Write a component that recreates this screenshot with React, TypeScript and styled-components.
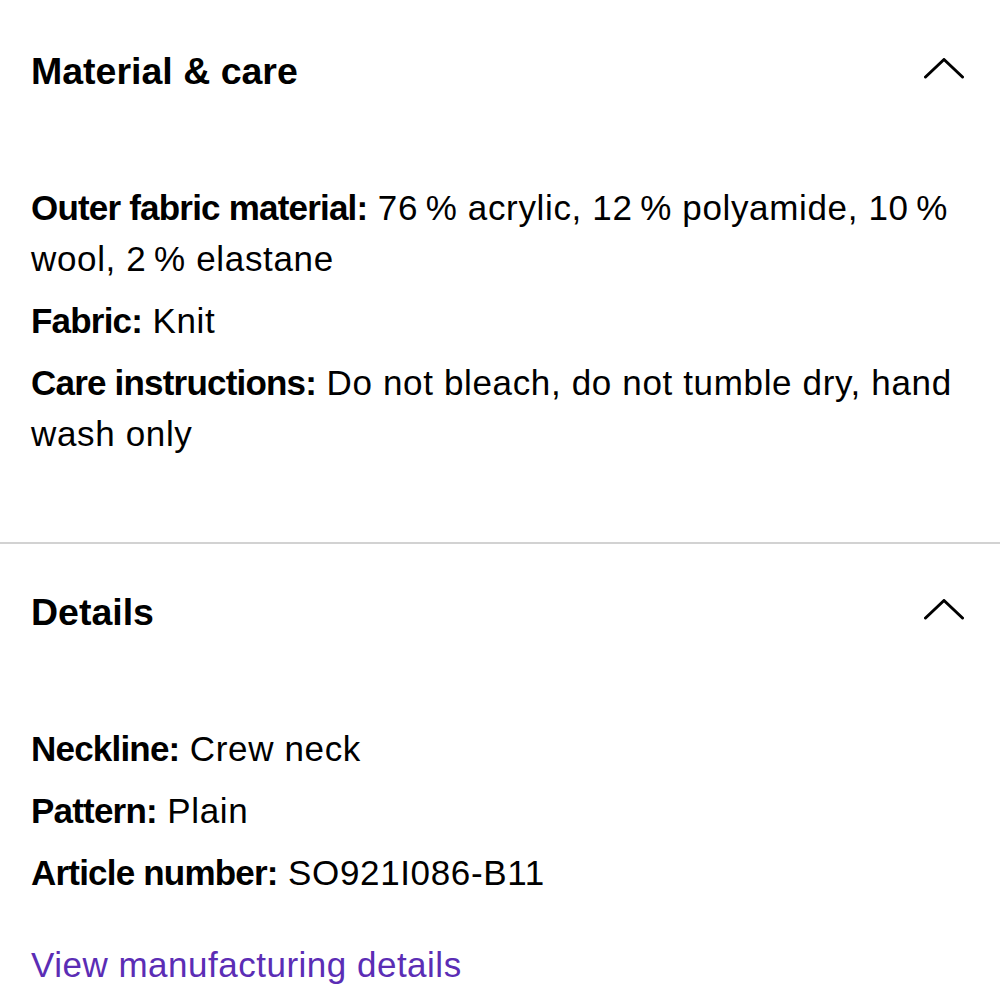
import styled, { createGlobalStyle } from 'styled-components';

type Attr = { label: string; value: string };

// narrow no-break space between number and percent sign, as in the source
const pct = (n: number) => `${n}\u202F%`;

const material: Attr[] = [
  {
    label: 'Outer fabric material:',
    value: `${pct(76)} acrylic, ${pct(12)} polyamide, ${pct(10)} wool, ${pct(2)} elastane`,
  },
  { label: 'Fabric:', value: 'Knit' },
  { label: 'Care instructions:', value: 'Do not bleach, do not tumble dry, hand wash only' },
];

const details: Attr[] = [
  { label: 'Neckline:', value: 'Crew neck' },
  { label: 'Pattern:', value: 'Plain' },
  { label: 'Article number:', value: 'SO921I086-B11' },
];

const ChevronUp = () => (
  <svg width="40" height="21" viewBox="0 0 40 21" fill="none">
    <path d="M1.5 19 L20 1.5 L38.5 19" stroke="#000" strokeWidth="3" strokeLinecap="round" strokeLinejoin="round" />
  </svg>
);

const Section = ({ title, items, link }: { title: string; items: Attr[]; link?: string }) => (
  <StyledSection>
    <Header>
      <Title>{title}</Title>
      <Toggle aria-label="Collapse">
        <ChevronUp />
      </Toggle>
    </Header>
    <List>
      {items.map((it) => (
        <Item key={it.label}>
          <Label>{it.label}</Label> {it.value}
        </Item>
      ))}
    </List>
    {link && <Link href="#">{link}</Link>}
  </StyledSection>
);

export default function App() {
  return (
    <>
      <GlobalStyle />
      <Page>
        <Section title="Material & care" items={material} />
        <Section title="Details" items={details} link="View manufacturing details" />
      </Page>
    </>
  );
}

// ============================
//  Styled Components
// ============================

const GlobalStyle = createGlobalStyle`
  html, body {
    margin: 0;
    padding: 0;
    background: #fff;
  }
  body {
    font-family: "Liberation Sans", Arial, Helvetica, sans-serif;
    color: #000;
  }
`;

const Page = styled.div`
  width: 1000px;
  padding-top: 3px;
`;

const StyledSection = styled.section`
  padding: 44px 36px 83px 31px;
  & + & {
    border-top: 2px solid #d2d2d2;
  }
`;

const Header = styled.div`
  display: flex;
  align-items: center;
  justify-content: space-between;
  height: 48px;
`;

const Title = styled.h2`
  margin: 0;
  font-size: 37.5px;
  font-weight: 700;
  line-height: 48px;
`;

const Toggle = styled.button`
  display: flex;
  align-items: center;
  justify-content: center;
  padding: 0;
  margin-top: -5px;
  border: none;
  background: none;
`;

const List = styled.div`
  display: flex;
  flex-direction: column;
  gap: 11px;
  margin-top: 87px;
`;

const Item = styled.p`
  margin: 0;
  font-size: 35px;
  line-height: 51px;
  letter-spacing: 0.65px;
`;

const Label = styled.span`
  font-weight: 700;
  letter-spacing: -0.8px;
`;

const Link = styled.a`
  display: block;
  margin-top: 41px;
  font-size: 35px;
  line-height: 51px;
  letter-spacing: 0.5px;
  color: #5b2db5;
  text-decoration: none;
`;
